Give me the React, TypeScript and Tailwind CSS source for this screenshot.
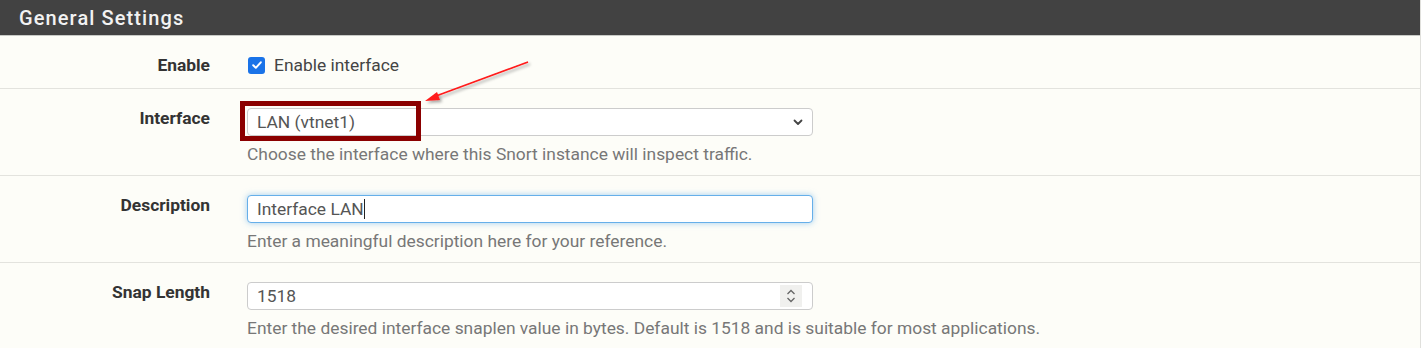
import React from "react";

function Row({
  label,
  children,
  help,
  pt = "pt-[19px]",
}: {
  label: string;
  children: React.ReactNode;
  help?: string;
  pt?: string;
}) {
  return (
    <div className={`flex border-b border-[#e3e3de] ${pt} ${help ? "h-[87px]" : "h-[53px]"}`}>
      <div
        className={`w-[210px] shrink-0 text-right text-[17.4px] leading-6 font-bold text-[#333] ${help ? "-mt-[2px]" : ""}`}
      >
        {label}
      </div>
      <div className="ml-[37px] w-[566px]">
        {children}
        {help ? <div className="mt-[6px] text-[17.4px] leading-6 text-[#777] whitespace-nowrap">{help}</div> : null}
      </div>
    </div>
  );
}

export default function App() {
  return (
    <div className="relative w-[1423px] h-[348px] bg-white" style={{ fontFamily: "Roboto, 'Liberation Sans', sans-serif" }}>
      <div className="w-[1421px] h-[348px] bg-[#fdfdf8] border-r border-[#e0e0dc]">
        <div className="h-[36px] bg-[#424242] border-b border-[#c8cac6] pl-[19px] flex items-center">
          <span className="text-[20px] font-medium text-[#f2f2f2] tracking-[1.1px]">General Settings</span>
        </div>

        <Row label="Enable" pt="pt-[17px]">
          <label className="flex items-center gap-[9px] h-6 text-[17.4px] text-[#444]">
            <span className="ml-[1px] w-[17px] h-[17px] rounded-[3px] bg-[#1a73e8] flex items-center justify-center">
              <svg width="12" height="12" viewBox="0 0 12 12" fill="none">
                <path d="M2.2 6.3 L4.8 8.8 L9.8 3.3" stroke="white" strokeWidth="2" strokeLinecap="round" strokeLinejoin="round" />
              </svg>
            </span>
            Enable interface
          </label>
        </Row>

        <Row label="Interface" help="Choose the interface where this Snort instance will inspect traffic.">
          <div className="relative">
            <div className="h-[28px] rounded-[4px] border border-[#ccc] bg-white flex items-center justify-between pl-[9px] pr-[8px] text-[17.4px] text-[#555]">
              <span>LAN (vtnet1)</span>
              <svg width="12" height="12" viewBox="0 0 12 12" fill="none">
                <path d="M2.5 4.5 L6 8 L9.5 4.5" stroke="#444" strokeWidth="1.8" strokeLinecap="round" strokeLinejoin="round" />
              </svg>
            </div>
            <div className="absolute left-[-7px] top-[-7px] w-[181px] h-[40px] border-[5px] border-[#8b0000]" />
          </div>
        </Row>

        <Row label="Description" help="Enter a meaningful description here for your reference.">
          <div className="h-[28px] rounded-[4px] border border-[#66afe9] bg-white shadow-[0_0_6px_rgba(102,175,233,0.6)] flex items-center pl-[9px] text-[17.4px] text-[#555]">
            <span>Interface LAN</span>
            <span className="w-[1px] h-[20px] bg-[#222]" />
          </div>
        </Row>

        <Row
          label="Snap Length"
          help="Enter the desired interface snaplen value in bytes. Default is 1518 and is suitable for most applications."
        >
          <div className="h-[28px] rounded-[4px] border border-[#ccc] bg-white flex items-center justify-between pl-[9px] pr-[10px] text-[17.4px] text-[#555]">
            <span>1518</span>
            <span className="w-[22px] h-[22px] bg-[#f0f0ee] flex flex-col items-center justify-center gap-[2px]">
              <svg width="10" height="6" viewBox="0 0 10 6" fill="none">
                <path d="M1.5 5 L5 1.5 L8.5 5" stroke="#666" strokeWidth="1.3" />
              </svg>
              <svg width="10" height="6" viewBox="0 0 10 6" fill="none">
                <path d="M1.5 1 L5 4.5 L8.5 1" stroke="#666" strokeWidth="1.3" />
              </svg>
            </span>
          </div>
        </Row>
      </div>

      <svg className="absolute left-0 top-0 pointer-events-none" width="1423" height="348">
        <defs>
          <filter id="sh" x="-20%" y="-20%" width="140%" height="140%">
            <feDropShadow dx="2" dy="2" stdDeviation="1.5" floodColor="#000" floodOpacity="0.35" />
          </filter>
        </defs>
        <g filter="url(#sh)">
          <line x1="528" y1="62" x2="436" y2="96" stroke="#ff1a1a" strokeWidth="1.6" />
          <path d="M425 101 L437 92 L440 100 Z" fill="#ff1a1a" />
        </g>
      </svg>
    </div>
  );
}
